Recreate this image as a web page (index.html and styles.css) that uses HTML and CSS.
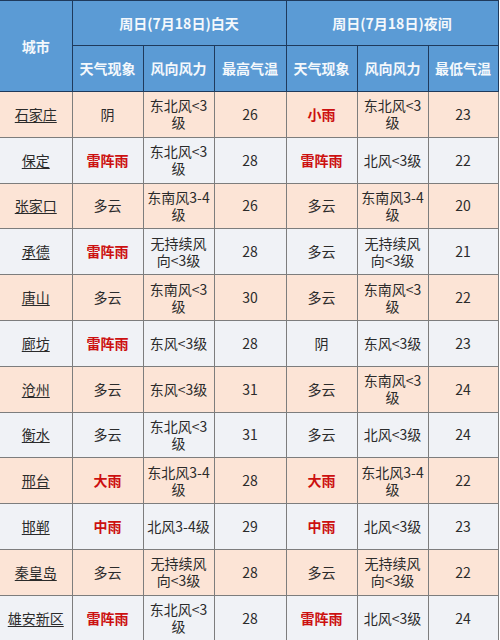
FILE: index.html
```html
<!DOCTYPE html>
<html lang="zh-CN">
<head>
<meta charset="utf-8">
<title>河北天气预报</title>
<link rel="stylesheet" href="styles.css">
</head>
<body>
<table class="wx">
  <colgroup>
    <col class="c1"><col class="c2"><col class="c3"><col class="c4"><col class="c5"><col class="c6"><col class="c7">
  </colgroup>
  <thead>
    <tr class="h1">
      <th rowspan="2" class="first">城市</th>
      <th colspan="3">周日(7月18日)白天</th>
      <th colspan="3">周日(7月18日)夜间</th>
    </tr>
    <tr class="h2">
      <th>天气现象</th><th>风向风力</th><th>最高气温</th>
      <th>天气现象</th><th>风向风力</th><th>最低气温</th>
    </tr>
  </thead>
  <tbody>
    <tr class="odd"><td class="city first"><u>石家庄</u></td><td>阴</td><td>东北风&lt;3级</td><td>26</td><td class="rain">小雨</td><td>东北风&lt;3级</td><td>23</td></tr>
    <tr class="even"><td class="city first"><u>保定</u></td><td class="rain">雷阵雨</td><td>东北风&lt;3级</td><td>28</td><td class="rain">雷阵雨</td><td>北风&lt;3级</td><td>22</td></tr>
    <tr class="odd"><td class="city first"><u>张家口</u></td><td>多云</td><td>东南风3-4级</td><td>26</td><td>多云</td><td>东南风3-4级</td><td>20</td></tr>
    <tr class="even"><td class="city first"><u>承德</u></td><td class="rain">雷阵雨</td><td>无持续风向&lt;3级</td><td>28</td><td>多云</td><td>无持续风向&lt;3级</td><td>21</td></tr>
    <tr class="odd"><td class="city first"><u>唐山</u></td><td>多云</td><td>东南风&lt;3级</td><td>30</td><td>多云</td><td>东南风&lt;3级</td><td>22</td></tr>
    <tr class="even"><td class="city first"><u>廊坊</u></td><td class="rain">雷阵雨</td><td>东风&lt;3级</td><td>28</td><td>阴</td><td>东风&lt;3级</td><td>23</td></tr>
    <tr class="odd"><td class="city first"><u>沧州</u></td><td>多云</td><td>东风&lt;3级</td><td>31</td><td>多云</td><td>东南风&lt;3级</td><td>24</td></tr>
    <tr class="even"><td class="city first"><u>衡水</u></td><td>多云</td><td>东北风&lt;3级</td><td>31</td><td>多云</td><td>北风&lt;3级</td><td>24</td></tr>
    <tr class="odd"><td class="city first"><u>邢台</u></td><td class="rain">大雨</td><td>东北风3-4级</td><td>28</td><td class="rain">大雨</td><td>东北风3-4级</td><td>22</td></tr>
    <tr class="even"><td class="city first"><u>邯郸</u></td><td class="rain">中雨</td><td>北风3-4级</td><td>29</td><td class="rain">中雨</td><td>北风&lt;3级</td><td>23</td></tr>
    <tr class="odd"><td class="city first"><u>秦皇岛</u></td><td>多云</td><td>无持续风向&lt;3级</td><td>28</td><td>多云</td><td>无持续风向&lt;3级</td><td>22</td></tr>
    <tr class="even"><td class="city first"><u>雄安新区</u></td><td class="rain">雷阵雨</td><td>东北风&lt;3级</td><td>28</td><td class="rain">雷阵雨</td><td>北风&lt;3级</td><td>24</td></tr>
  </tbody>
</table>
</body>
</html>
```

FILE: styles.css
```css
html, body {
  margin: 0;
  padding: 0;
  background: #ffffff;
}

.wx {
  border-collapse: collapse;
  table-layout: fixed;
  width: 498px;
  font-family: "Noto Sans CJK SC", "Noto Sans", sans-serif;
  font-size: 14px;
  line-height: 17px;
  color: #2b2b2b;
}

.c1 { width: 72px; }
.c2 { width: 71px; }
.c3 { width: 71px; }
.c4 { width: 72px; }
.c5 { width: 71px; }
.c6 { width: 71px; }
.c7 { width: 70px; }

.wx th {
  background: #5b9bd5;
  color: #f4f8fc;
  font-weight: bold;
  border: 1px solid #1f3a5c;
  padding: 0 3px;
  text-align: center;
  vertical-align: middle;
}

.h1 { height: 45px; }
.h2 { height: 46px; }

.wx td {
  border: 1px solid #7d7d7d;
  padding: 0 3px;
  text-align: center;
  vertical-align: middle;
  height: 45.8px;
  box-sizing: border-box;
}

.wx .first {
  border-left: none;
}

.odd td { background: #fce4d6; }
.even td { background: #f0f2f6; }

.city u {
  text-decoration: underline;
  text-underline-offset: 2px;
}

.rain {
  color: #cc1010;
  font-weight: bold;
}
```
